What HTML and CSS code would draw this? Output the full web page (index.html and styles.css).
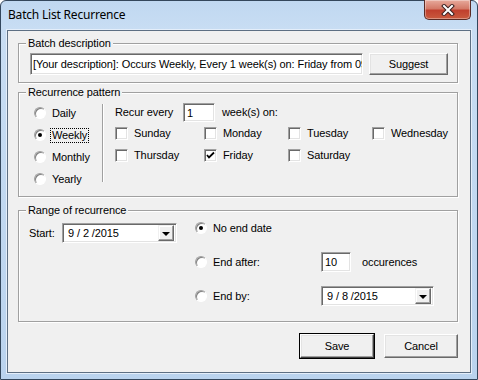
FILE: index.html
```html
<!DOCTYPE html>
<html lang="en">
  <head>
    <meta charset="UTF-8" />
    <meta name="viewport" content="width=device-width, initial-scale=1.0" />
    <title>Batch List Recurrence</title>
    <link rel="stylesheet" href="styles.css">
  </head>
  <body>
    <div class="window">
      <div class="titlebar">
        <span class="title">Batch List Recurrence</span>
        <button class="close" type="button">
          <svg width="14" height="12" viewBox="0 0 14 12">
            <path d="M3 2 L11 10 M11 2 L3 10" stroke="#3a2020" stroke-width="4" stroke-linecap="square" />
            <path d="M3 2 L11 10 M11 2 L3 10" stroke="#fff" stroke-width="2" stroke-linecap="square" />
          </svg>
        </button>
      </div>

      <div class="client">
        <fieldset class="group group-desc">
          <legend>Batch description</legend>
          <div class="desc-row">
            <div class="textbox desc-text"><span class="desc-value">[Your description]: Occurs Weekly, Every 1 week(s) on: Friday from 09/02/2015</span></div>
            <button class="btn suggest" type="button">Suggest</button>
          </div>
        </fieldset>

        <fieldset class="group group-pattern">
          <legend>Recurrence pattern</legend>
          <div class="pattern">
            <div class="freq">
              <label class="opt"><span class="radio"></span><span class="opt-text">Daily</span></label>
              <label class="opt"><span class="radio checked"></span><span class="opt-text focus">Weekly</span></label>
              <label class="opt"><span class="radio"></span><span class="opt-text">Monthly</span></label>
              <label class="opt"><span class="radio"></span><span class="opt-text">Yearly</span></label>
            </div>
            <div class="separator"></div>
            <div class="weekly">
              <div class="recur-row">
                <span class="recur-label">Recur every</span>
                <div class="textbox every">1</div>
                <span class="recur-unit">week(s) on:</span>
              </div>
              <div class="days">
                <label class="opt"><span class="check"></span><span class="day">Sunday</span></label>
                <label class="opt"><span class="check"></span><span class="day">Monday</span></label>
                <label class="opt"><span class="check"></span><span class="day">Tuesday</span></label>
                <label class="opt"><span class="check"></span><span class="day">Wednesday</span></label>
                <label class="opt"><span class="check"></span><span class="day">Thursday</span></label>
                <label class="opt">
                  <span class="check">
                    <svg width="9" height="9" viewBox="0 0 9 9"><path d="M1 4 L3 6.5 L8 1.5" fill="none" stroke="#000" stroke-width="1.8" /></svg>
                  </span>
                  <span class="day">Friday</span>
                </label>
                <label class="opt"><span class="check"></span><span class="day">Saturday</span></label>
              </div>
            </div>
          </div>
        </fieldset>

        <fieldset class="group group-range">
          <legend>Range of recurrence</legend>
          <div class="range">
            <div class="start">
              <span class="start-label">Start:</span>
              <div class="combo start-combo">
                <span class="combo-value">9 / 2 /2015</span>
                <span class="combo-btn"><span class="arrow"></span></span>
              </div>
            </div>
            <div class="ends">
              <label class="opt end-opt"><span class="radio checked"></span><span class="opt-text">No end date</span></label>
              <span></span>
              <label class="opt end-opt"><span class="radio"></span><span class="opt-text">End after:</span></label>
              <div class="after">
                <div class="textbox count">10</div>
                <span class="count-unit">occurences</span>
              </div>
              <label class="opt end-opt"><span class="radio"></span><span class="opt-text">End by:</span></label>
              <div class="combo end-combo">
                <span class="combo-value">9 / 8 /2015</span>
                <span class="combo-btn"><span class="arrow"></span></span>
              </div>
            </div>
          </div>
        </fieldset>

        <div class="actions">
          <button class="btn default" type="button">Save</button>
          <button class="btn" type="button">Cancel</button>
        </div>
      </div>
    </div>
  </body>
</html>
```

FILE: styles.css
```css
body {
  margin: 0;
  padding: 0;
  font-family: "Liberation Sans", Arial, sans-serif;
  font-size: 11px;
  line-height: 13px;
  letter-spacing: -0.1px;
  color: #000;
  background: #fff;
}
.window {
  width: 478px;
  height: 380px;
  box-sizing: border-box;
  border: 1px solid #34475c;
  border-radius: 6px 6px 0 0;
  background: linear-gradient(180deg, #c0d8f1 0, #c8ddf3 28px, #bad3ee 100%);
  display: flex;
  flex-direction: column;
}
.titlebar {
  height: 29px;
  display: flex;
  align-items: flex-start;
  justify-content: space-between;
  padding-left: 7px;
}
.title {
  font-family: "Noto Sans", sans-serif;
  font-size: 12px;
  line-height: 16px;
  margin-top: 6px;
  letter-spacing: -0.2px;
}
.close {
  width: 47px;
  height: 20px;
  margin: -1px 6px 0 0;
  padding: 0;
  border: 1px solid #5a2b25;
  border-top: none;
  border-radius: 0 0 5px 5px;
  background: linear-gradient(180deg, #e7aa9c 0, #d47a68 45%, #c0402e 55%, #c95a3e 100%);
  box-shadow: inset 0 0 0 1px rgba(255, 255, 255, 0.35);
  display: flex;
  align-items: center;
  justify-content: center;
}
.client {
  height: 343px;
  box-sizing: border-box;
  margin: 0 6px;
  border: 1px solid #5d6f83;
  box-shadow: 0 0 0 1px #e4eefa;
  background: #f0f0f0;
  display: flex;
  flex-direction: column;
}

/* group boxes */
.group {
  margin: 0 12px 0 10px;
  padding: 0;
  min-width: 0;
  border: 1px solid #a0a0a0;
  box-shadow: inset 1px 1px 0 #fff, 1px 1px 0 #fff;
}
.group legend {
  margin-left: 7px;
  padding: 0 2px;
  line-height: 13px;
  background: #f0f0f0;
}
.group-desc {
  margin-top: 6px;
}
.group-pattern {
  margin-top: 3px;
}
.group-range {
  margin-top: 7px;
}

/* sunken and raised boxes */
.textbox,
.combo {
  box-sizing: border-box;
  background: #fff;
  border: 1px solid;
  border-color: #a0a0a0 #fff #fff #a0a0a0;
  box-shadow: inset 1px 1px 0 #696969, inset -1px -1px 0 #e3e3e3;
}
.btn {
  box-sizing: border-box;
  height: 24px;
  width: 74px;
  padding: 0;
  font-family: inherit;
  font-size: 11px;
  font-weight: 400;
  letter-spacing: -0.1px;
  color: #000;
  background: #f0f0f0;
  border: 1px solid;
  border-color: #fff #696969 #696969 #fff;
  box-shadow: inset -1px -1px 0 #a0a0a0, inset 1px 1px 0 #e3e3e3;
}
.btn.default {
  outline: 1px solid #000;
  outline-offset: 0;
  border-color: #fff #404040 #404040 #fff;
}

.desc-row {
  display: flex;
  gap: 6px;
  padding: 3px 9px 7px 11px;
}
.desc-text {
  width: 333px;
  height: 22px;
  padding: 4px 0 0 2px;
  white-space: nowrap;
  overflow: hidden;
  flex: none;
}
.suggest {
  width: 79px;
  height: 22px;
}

/* recurrence pattern */
.pattern {
  display: flex;
  padding: 3px 0 6px 15px;
}
.freq {
  width: 68px;
}
.opt {
  display: flex;
  align-items: center;
  height: 22px;
}
.radio {
  position: relative;
  box-sizing: border-box;
  width: 12px;
  height: 12px;
  border-radius: 50%;
  background: #fff;
  border: 1px solid;
  border-color: #a0a0a0 #fff #fff #a0a0a0;
  box-shadow: inset 1px 1px 0 #808080;
  flex: none;
}
.radio.checked::after {
  content: "";
  position: absolute;
  left: 3px;
  top: 3px;
  width: 4px;
  height: 4px;
  border-radius: 50%;
  background: #000;
}
.opt-text {
  border: 1px dotted transparent;
  padding: 0 1px;
  margin-left: 4px;
}
.opt-text.focus {
  border-color: #000;
}
.separator {
  margin-top: 2px;
  height: 78px;
  border-left: 1px solid #a0a0a0;
  border-right: 1px solid #fff;
}
.weekly {
  margin-left: 11px;
}
.recur-row {
  display: flex;
  align-items: center;
  height: 20px;
}
.recur-label {
  width: 68px;
}
.every {
  width: 32px;
  height: 19px;
  padding: 3px 0 0 3px;
}
.recur-unit {
  margin-left: 7px;
}
.days {
  display: grid;
  grid-template-columns: 89px 84px 84px auto;
}
.check {
  box-sizing: border-box;
  width: 13px;
  height: 13px;
  background: #fff;
  border: 1px solid;
  border-color: #a0a0a0 #fff #fff #a0a0a0;
  box-shadow: inset 1px 1px 0 #696969, inset -1px -1px 0 #e3e3e3;
  display: flex;
  align-items: center;
  justify-content: center;
  flex: none;
}
.check svg {
  display: block;
}
.day {
  margin-left: 6px;
}

/* range of recurrence */
.range {
  display: flex;
  padding: 1px 0 15px 10px;
}
.start {
  width: 166px;
  height: 20px;
  margin-top: 5px;
  display: flex;
  align-items: center;
}
.start-label {
  width: 33px;
}
.combo {
  height: 20px;
  display: flex;
  align-items: center;
  padding: 2px 2px 2px 0;
}
.start-combo {
  width: 115px;
}
.end-combo {
  width: 113px;
}
.combo-value {
  flex: 1;
  padding-left: 5px;
}
.combo-btn {
  box-sizing: border-box;
  width: 16px;
  height: 16px;
  background: #f0f0f0;
  border: 1px solid;
  border-color: #f0f0f0 #696969 #696969 #f0f0f0;
  box-shadow: inset -1px -1px 0 #a0a0a0, inset 1px 1px 0 #fff;
  display: flex;
  align-items: center;
  justify-content: center;
}
.arrow {
  width: 0;
  height: 0;
  border-left: 4px solid transparent;
  border-right: 4px solid transparent;
  border-top: 4px solid #000;
  margin-top: 1px;
}
.ends {
  display: grid;
  grid-template-columns: 126px auto;
  grid-auto-rows: 20px;
  row-gap: 14px;
}
.end-opt {
  height: 20px;
}
.after {
  display: flex;
  align-items: center;
}
.count {
  width: 30px;
  height: 20px;
  padding: 3px 0 0 3px;
}
.count-unit {
  margin-left: 11px;
}

.actions {
  display: flex;
  justify-content: flex-end;
  gap: 10px;
  margin: 12px 12px 0 0;
}
```
